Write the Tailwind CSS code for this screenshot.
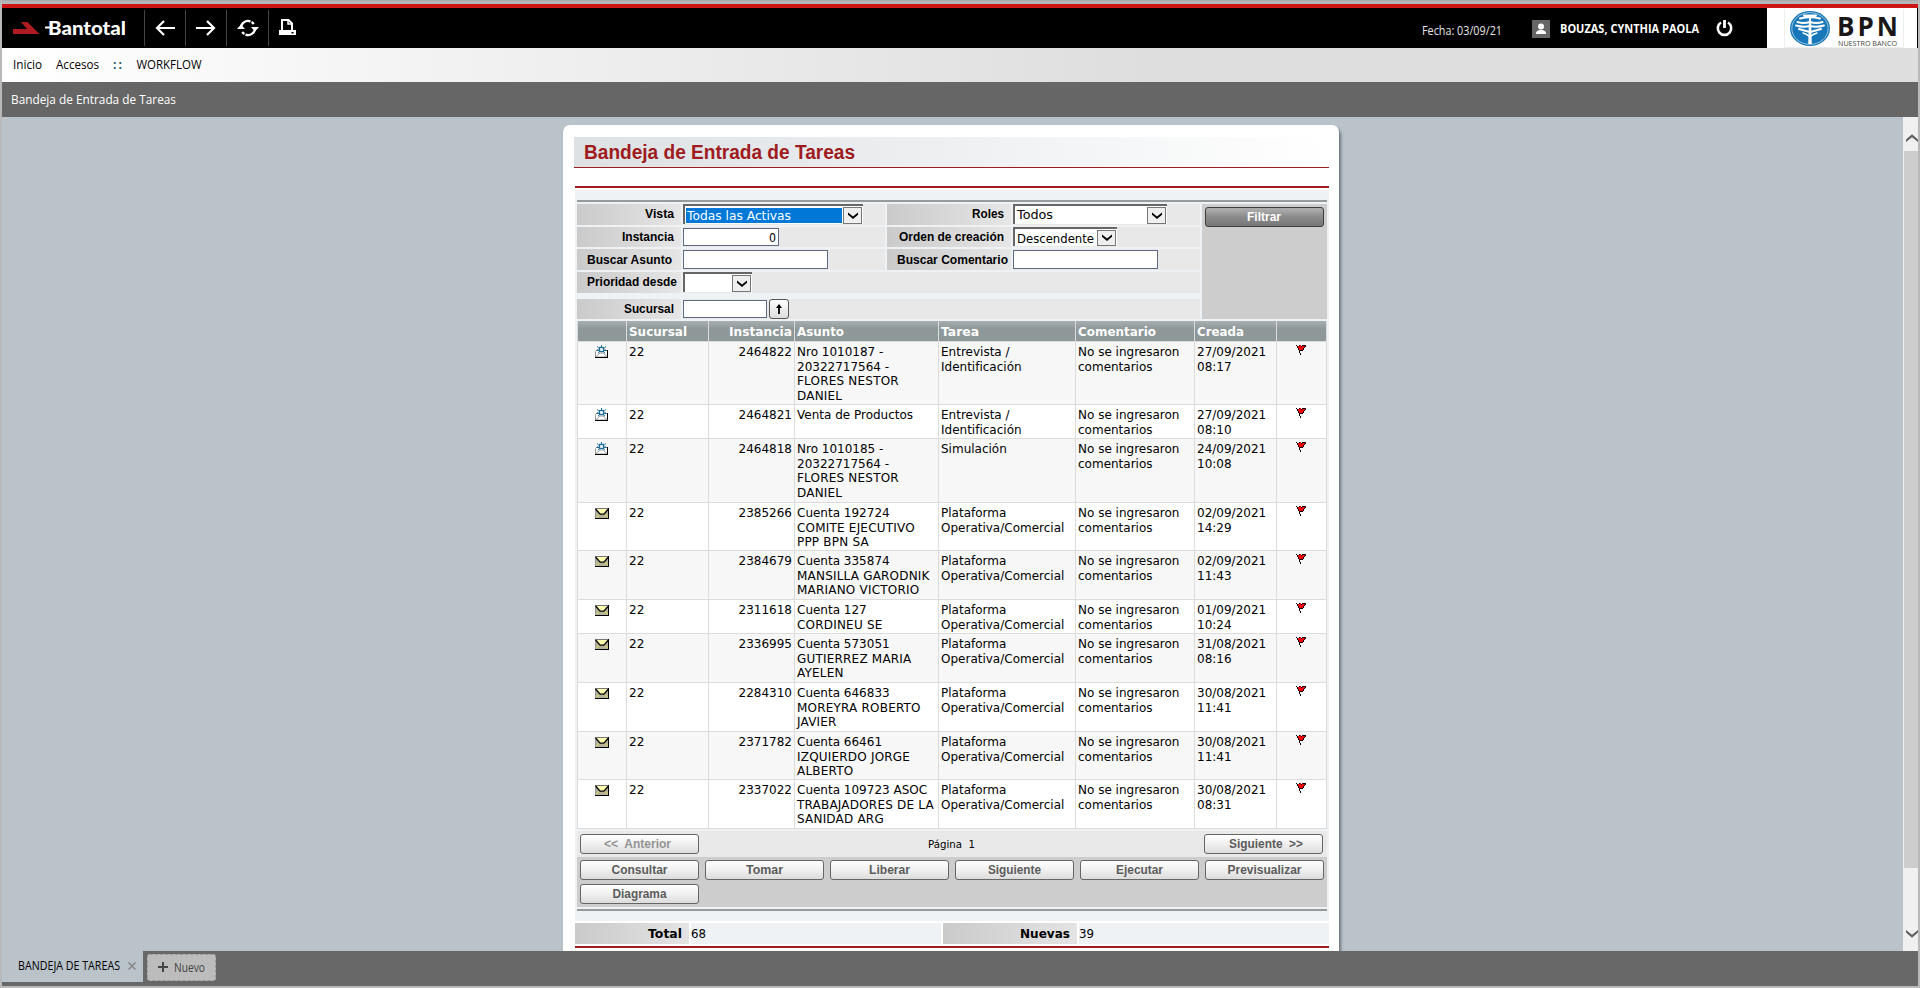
<!DOCTYPE html>
<html lang="es">
<head>
<meta charset="utf-8">
<title>Bandeja de Entrada de Tareas</title>
<script src="https://cdn.jsdelivr.net/npm/@tailwindcss/browser@4"></script>
</head>
<body class="w-[1920px] h-[988px] overflow-hidden bg-[#b9b9b9] font-['Open_Sans',sans-serif]">
<svg class="hidden">
  <symbol id="chev" viewBox="0 0 10 7"><path d="M0 0.5v2.2L5 7l5-4.3V0.5L5 4.6z"/></symbol>
  <symbol id="mail-new" viewBox="0 0 13 13"><path d="M.5 6.5 3 4h7l2.5 2.500V12H.5z" fill="#fff" stroke="#999"/><path d="M1 11.500 5 8h3l4 3.500" fill="none" stroke="#888" stroke-width=".8"/><path d="M0 12.500H13M12.500 5V13" stroke="#000" fill="none"/><path d="M6.500 0v2M2 1.500l1.500 1M11 1.500l-1.500 1M1.500 5.500h2.500M9 5.500h2.500M3 8l1.500-1M10 8 8.500 7" stroke="#1c6f9d" fill="none"/><rect x="4.500" y="2.500" width="4" height="4" fill="#fff" stroke="#1c6f9d" stroke-width="1.300"/></symbol>
  <symbol id="mail" viewBox="0 0 14 11"><path d="M0 0h14v11H0z" fill="#b5b29a"/><path d="M1 0h12L7 7z" fill="#ffffb0"/><path d="M1 9.500 5 5.500M13 9.500 9 5.500" stroke="#e9e640" stroke-width=".9"/><path d="M.5 0v10" stroke="#999"/><path d="M0 .5h14" stroke="#777"/><path d="M.5 1 5 6.200h4L13.500 1" fill="none" stroke="#000" stroke-width="1.200"/><path d="M0 10.500h14M13.500 0v11" stroke="#000" fill="none"/></symbol>
  <symbol id="flag" viewBox="0 0 10 10" shape-rendering="crispEdges"><path d="M1 1h2V0h2v1h5v1H9v1H8v2H4v1H3V4H2V3H1z" fill="#f00"/><path d="M0 0h1v1H0zM1 1h1v2H1zM2 3h1v2H2zM3 5h1v3H3zM4 8h1v2H4zM5 1h1v1H5zM6 0h4v1H6zM9 1h1v1H9zM8 2h1v1H8zM7 3h1v2H7zM4 5h3v1H4zM3 0h1v1H3z" fill="#100"/></symbol>
</svg>
<div class="flex flex-col w-[1916px] h-[986px] ml-[2px]">
  <div class="h-1 bg-[#b4b7ba] border-t border-[#aaa]"></div>
  <div class="h-1 bg-[#cb1517]"></div>
  <header class="h-10 bg-black flex items-stretch text-white">
    <div class="w-[142px] flex pt-[11px] pl-[11px] shrink-0">
      <svg class="w-[27px] h-[15px] mt-[2px]" viewBox="0 0 27 15"><path d="M0 8h14L8 1h6.500L26.500 13H0z" fill="#ae1c21"/></svg>
      <svg class="w-[88px] h-[20px] ml-1 shrink-0" viewBox="0 0 88 20"><text x="4" y="16" textLength="78" lengthAdjust="spacingAndGlyphs" fill="#fff" font-family="Lato" font-weight="900" font-size="19">Bantotal</text><path d="M1 8.500h8" stroke="#fff" stroke-width="2"/></svg>
    </div>
    <div class="w-[41px] my-[2px] mb-[2px] border-l border-[#444] flex items-center justify-center"><svg class="w-5 h-4" viewBox="0 0 20 16" fill="none" stroke="#fff" stroke-width="2.200"><path d="M20 8H2M9 1 2 8l7 7"/></svg></div>
    <div class="w-[41px] my-[2px] border-l border-[#444] flex items-center justify-center"><svg class="w-5 h-4" viewBox="0 0 20 16" fill="none" stroke="#fff" stroke-width="2.200"><path d="M0 8h18M11 1l7 7-7 7"/></svg></div>
    <div class="w-[42px] my-[2px] border-l border-[#444] flex items-center justify-center"><svg class="w-[22px] h-[18px]" viewBox="0 0 22 18"><path d="M4 9.500A7 7 0 0 1 13.500 2.400M18 8.500A7 7 0 0 1 8.500 15.600M7.500 15 A7 7 0 0 1 5.200 13M14.500 3A7 7 0 0 1 16.800 5" fill="none" stroke="#fff" stroke-width="2.300"/><path d="M0 10 4 5.500 8 10zM14 8h8l-4 4.500z" fill="#fff"/></svg></div>
    <div class="w-[40px] my-[2px] border-l border-[#444] pl-[10px] pt-[9px]"><svg class="w-[17px] h-[17px]" viewBox="0 0 17 17"><path d="M3 11V1h6.500L13 4.500V11" fill="none" stroke="#fff" stroke-width="2"/><path d="M9 1v4h4" fill="none" stroke="#fff" stroke-width="1.500"/><path d="M0 11h17v5H0z" fill="#fff"/><path d="M12.500 13h2v1.500h-2z" fill="#000"/></svg></div>
    <div class="flex-1"></div>
    <svg class="w-[84px] h-10" viewBox="0 0 84 40"><text x="1" y="27" textLength="80" lengthAdjust="spacingAndGlyphs" fill="#e6e6e6" font-family="Open Sans" font-size="12">Fecha: 03/09/21</text></svg>
    <div class="w-[18px] h-[18px] bg-[#666] mt-3 ml-[27px]"><svg class="w-[18px] h-[18px]" viewBox="0 0 18 18" fill="#fff"><circle cx="9" cy="6.500" r="3"/><path d="M4 14c0-3 2-4 5-4s5 1 5 4z"/></svg></div>
    <svg class="w-[142px] h-10 ml-[10px]" viewBox="0 0 142 40"><text x="0" y="25" textLength="139" lengthAdjust="spacingAndGlyphs" fill="#fff" font-family="Open Sans" font-weight="700" font-size="12">BOUZAS, CYNTHIA PAOLA</text></svg>
    <svg class="w-[17px] h-[18px] mt-[11px] ml-[14px] mr-[34px]" viewBox="0 0 17 18" fill="none" stroke="#fff"><path d="M5 3.500a6.700 6.700 0 1 0 7 0" stroke-width="2.600"/><path d="M8.500 1v8" stroke-width="2.800"/></svg>
    <svg class="w-[150px] h-10 bg-white mr-[1px]" viewBox="0 0 150 40"><path d="M17.500 1v38.500h119V1" fill="none" stroke="#eee"/><ellipse cx="43" cy="20.500" rx="20" ry="17.500" fill="#1777b8"/><ellipse cx="43" cy="20.500" rx="18.200" ry="15.900" fill="none" stroke="#fff" stroke-opacity=".7" stroke-width=".8"/><path d="M42 10h2l.8 26h-3.600z" fill="#fff"/><g fill="none" stroke="#fff" stroke-width="2" stroke-linecap="round"><path d="M37 7.500h12M33 10.500q10-2.500 20 0M30.500 14q6 2 12.500 0 6.500 2 12.500 0M29 17.500q7 2 14 .5 7 1.500 14-.5M32 21q5 1.500 11 3 6-1.500 11-3"/><path d="M36 25q4 1 7 4 3-3 7-4" stroke-width="1.300"/></g><text x="70" y="27.500" textLength="61" lengthAdjust="spacing" fill="#1b1719" font-family="Open Sans" font-weight="700" font-size="26">BPN</text><text x="71" y="37.500" textLength="59" lengthAdjust="spacingAndGlyphs" fill="#444" font-family="Open Sans" font-size="7">NUESTRO BANCO</text></svg>
  </header>
  <nav class="h-[34px] bg-linear-to-r from-white from-0% to-[#dedede] to-60%">
    <svg class="w-[220px] h-[34px] font-['Open_Sans']" viewBox="0 0 220 34" font-size="12"><text x="11" y="21" textLength="29" lengthAdjust="spacingAndGlyphs">Inicio</text><text x="54" y="21" textLength="43" lengthAdjust="spacingAndGlyphs">Accesos</text><text x="111" y="21" fill="#256" textLength="9" font-weight="700">::</text><text x="134.500" y="21" textLength="65" lengthAdjust="spacingAndGlyphs">WORKFLOW</text></svg>
  </nav>
  <div class="h-[35px] bg-[#666]"><svg class="w-[220px] h-[35px] font-['Open_Sans']" viewBox="0 0 220 35" font-size="13" fill="#fff"><text x="9" y="22" textLength="165" lengthAdjust="spacingAndGlyphs">Bandeja de Entrada de Tareas</text></svg></div>
  <main class="h-[834px] bg-[#bac2ca] flex overflow-hidden">
    <div class="flex-1 pl-[561px] pt-2">
      <section class="w-[776px] h-[840px] bg-white rounded-t-[7px] shadow-[2px_3px_3px_#6c747c] pl-[11px] pt-3 pr-[10px]">
        <div class="h-[31px] bg-linear-to-r from-[#dde1e4] to-white border-b border-[#9d1c20]"><svg class="w-[300px] h-[30px]" viewBox="0 0 300 30"><text x="10" y="22" textLength="271" lengthAdjust="spacingAndGlyphs" fill="#9e1b20" font-family="Liberation Sans" font-weight="700" font-size="19.500">Bandeja de Entrada de Tareas</text></svg></div>
        <div class="ml-px mt-[18px] h-[2px] bg-[#9d1c20]"></div>
        <div class="ml-px mt-[2px] bg-[#eef2f5] px-[2px] pt-[10px] h-[731px]">
          <div class="h-[2px] bg-[#959a9b] mb-[2px]"></div>
          <div class="flex gap-[2px] h-[115px]" id="filters">
            <div class="w-[623px] flex flex-col text-[13px] font-['DejaVu_Sans',sans-serif]">
              <div class="flex gap-[2px] h-[21px] mb-[2px]">
                <div class="w-[104px] bg-linear-to-r from-[#cacaca] to-[#e6e6e6]"><svg class="w-[104px] h-[21px] block"><text x="68" y="14" textLength="29">Vista</text></svg></div>
                <div class="w-[202px] bg-[#e8e8e8]"><div class="w-[180px] h-[20px] border-t-2 border-l-2 border-[#666] bg-white flex items-center justify-between pl-px pr-px"><svg class="w-[156px] h-[15px] bg-[#0078d7]"><text x="1" y="12" class="fill-white" font-weight="400" textLength="104" lengthAdjust="spacingAndGlyphs">Todas las Activas</text></svg><span class="w-[19px] h-[17px] border border-[#777] bg-[#efefef] flex items-center justify-center"><svg class="w-[10px] h-[7px]"><use href="#chev"/></svg></span></div></div>
                <div class="w-[124px] bg-linear-to-r from-[#cacaca] to-[#e6e6e6]"><svg class="w-[124px] h-[21px] block"><text x="85" y="14" textLength="32">Roles</text></svg></div>
                <div class="w-[187px] bg-[#e8e8e8]"><div class="w-[154px] h-[20px] border-t-2 border-l-2 border-[#666] bg-white flex items-center justify-between pl-px pr-px"><svg class="w-[120px] h-[16px]"><text x="1" y="12" font-weight="400" textLength="36" lengthAdjust="spacingAndGlyphs">Todos</text></svg><span class="w-[19px] h-[17px] border border-[#777] bg-[#efefef] flex items-center justify-center"><svg class="w-[10px] h-[7px]"><use href="#chev"/></svg></span></div></div>
              </div>
              <div class="flex gap-[2px] h-[20px] mb-[2px]">
                <div class="w-[104px] bg-linear-to-r from-[#cacaca] to-[#e6e6e6]"><svg class="w-[104px] h-[20px] block"><text x="45" y="14" textLength="52">Instancia</text></svg></div>
                <div class="w-[202px] bg-[#e8e8e8]"><div class="mt-px w-[96px] h-[18px] border border-[#5f6b85] bg-white"><svg class="w-[94px] h-[16px] block"><text x="85" y="13" font-weight="400" textLength="7" lengthAdjust="spacingAndGlyphs">0</text></svg></div></div>
                <div class="w-[124px] bg-linear-to-r from-[#cacaca] to-[#e6e6e6]"><svg class="w-[124px] h-[20px] block"><text x="12" y="14" textLength="105">Orden de creación</text></svg></div>
                <div class="w-[187px] bg-[#e8e8e8]"><div class="w-[104px] h-[19px] border-t-2 border-l-2 border-[#666] bg-white flex items-center justify-between pl-px pr-px"><svg class="w-[80px] h-[16px]"><text x="1" y="12.500" font-weight="400" textLength="77" lengthAdjust="spacingAndGlyphs">Descendente</text></svg><span class="w-[19px] h-[16px] border border-[#777] bg-[#efefef] flex items-center justify-center"><svg class="w-[10px] h-[7px]"><use href="#chev"/></svg></span></div></div>
              </div>
              <div class="flex gap-[2px] h-[21px] mb-[2px]">
                <div class="w-[104px] bg-linear-to-r from-[#cacaca] to-[#e6e6e6]"><svg class="w-[104px] h-[21px] block"><text x="10" y="15" textLength="85">Buscar Asunto</text></svg></div>
                <div class="w-[202px] bg-[#e8e8e8]"><div class="mt-px w-[145px] h-[19px] border border-[#5f6b85] bg-white"></div></div>
                <div class="w-[124px] bg-linear-to-r from-[#cacaca] to-[#e6e6e6]"><svg class="w-[124px] h-[21px] block"><text x="10" y="15" textLength="111">Buscar Comentario</text></svg></div>
                <div class="w-[187px] bg-[#e8e8e8]"><div class="mt-px w-[145px] h-[19px] border border-[#5f6b85] bg-white"></div></div>
              </div>
              <div class="flex gap-[2px] h-[21px] mb-[6px]">
                <div class="w-[104px] bg-linear-to-r from-[#cacaca] to-[#e6e6e6]"><svg class="w-[104px] h-[21px] block"><text x="10" y="14" textLength="90">Prioridad desde</text></svg></div>
                <div class="w-[517px] bg-[#e8e8e8]"><div class="w-[69px] h-[20px] border-t-2 border-l-2 border-[#666] bg-white flex items-center justify-end pr-px"><span class="w-[19px] h-[17px] border border-[#777] bg-[#efefef] flex items-center justify-center"><svg class="w-[10px] h-[7px]"><use href="#chev"/></svg></span></div></div>
              </div>
              <div class="flex gap-[2px] h-[20px]">
                <div class="w-[104px] bg-linear-to-r from-[#cacaca] to-[#e6e6e6]"><svg class="w-[104px] h-[20px] block"><text x="47" y="14" textLength="50">Sucursal</text></svg></div>
                <div class="w-[517px] bg-[#e8e8e8] flex gap-[2px]"><div class="mt-px w-[84px] h-[18px] border border-[#5f6b85] bg-white"></div><div class="w-[20px] h-[20px] rounded-[3px] border border-[#555] bg-linear-to-b from-white to-[#ddd] flex items-center justify-center"><svg class="w-[8px] h-[10px]" viewBox="0 0 8 10"><path d="M4 10V2" stroke="#000" stroke-width="1.800"/><path d="M4 0 7 4H1z"/></svg></div></div>
              </div>
            </div>
            <div class="w-[125px] bg-[#cdcdcd] pl-[3px] pt-[3px]"><button class="w-[119px] h-[20px] block rounded-[3px] border border-[#3c3c3c] bg-linear-to-b from-[#aaa] from-10% via-[#8b8b8b] via-50% to-[#777]"><svg class="w-[117px] h-[18px] block"><text x="41" y="13" textLength="34" class="fill-white">Filtrar</text></svg></button></div>
          </div>
          <div id="grid" class="mt-[2px] w-[750px] h-[508px] border-l border-[#dcdcdc] font-['DejaVu_Sans',sans-serif]"></div>
          <div class="mt-[2px] h-[26px] bg-[#e9e9e9] flex justify-between items-start pt-[3px] pl-[3px] pr-[4px]">
            <button class="w-[119px] h-[20px] rounded-[3px] border border-[#666] bg-linear-to-b from-white via-[#f0f0f0] to-[#dcdcdc]"><svg class="w-[117px] h-[18px] block"><text x="23" y="13" textLength="67" class="fill-[#949494]" xml:space="preserve">&lt;&lt;  Anterior</text></svg></button>
            <svg class="w-[50px] h-[20px] font-['DejaVu_Sans']"><text x="1" y="14" font-size="10" xml:space="preserve" textLength="47" lengthAdjust="spacingAndGlyphs">Página  1</text></svg>
            <button class="w-[119px] h-[20px] rounded-[3px] border border-[#666] bg-linear-to-b from-white via-[#f0f0f0] to-[#dcdcdc]"><svg class="w-[117px] h-[18px] block"><text x="24" y="13" textLength="74" class="fill-[#5c5c5c]" xml:space="preserve">Siguiente  &gt;&gt;</text></svg></button>
          </div>
          <div id="actions" class="h-[50px] bg-[#cdcdcd] flex flex-wrap content-start gap-x-[6px] gap-y-[4px] pt-[3px] pl-[3px]"></div>
          <div class="h-[2px] mt-[2px] bg-[#959a9b]"></div>
        </div>
        <div class="ml-px mt-[2px] h-[21px] flex gap-[2px] font-['DejaVu_Sans'] text-[13px]">
          <div class="w-[114px] bg-linear-to-r from-[#cacaca] to-[#e4e4e4]"><svg class="w-[114px] h-[21px] block"><text x="73" y="15" textLength="34" lengthAdjust="spacingAndGlyphs" font-weight="700">Total</text></svg></div>
          <div class="w-[250px] bg-[#eef2f5]"><svg class="w-[50px] h-[21px] block"><text x="0" y="15" textLength="15" lengthAdjust="spacingAndGlyphs">68</text></svg></div>
          <div class="w-[134px] bg-linear-to-r from-[#cacaca] to-[#e4e4e4]"><svg class="w-[134px] h-[21px] block"><text x="77" y="15" textLength="50" lengthAdjust="spacingAndGlyphs" font-weight="700">Nuevas</text></svg></div>
          <div class="w-[250px] bg-[#eef2f5]"><svg class="w-[50px] h-[21px] block"><text x="0" y="15" textLength="15" lengthAdjust="spacingAndGlyphs">39</text></svg></div>
        </div>
        <div class="ml-px mt-[2px] h-[2px] bg-[#9d1c20]"></div>
      </section>
    </div>
    <div class="w-[15px] bg-[#f0f0f0] flex flex-col items-end">
      <div class="h-[34px] w-[15px] flex items-center justify-center pt-[9px] pl-[2px]"><svg class="w-[12px] h-[9px] shrink-0 rotate-180 fill-[#606060]"><use href="#chev"/></svg></div>
      <div class="w-[14px] h-[717px] bg-[#cdcdcd]"></div>
      <div class="flex-1 w-[15px] flex justify-center items-end pb-[13px] pl-[2px]"><svg class="w-[12px] h-[9px] fill-[#606060]"><use href="#chev"/></svg></div>
    </div>
  </main>
  <footer class="h-[35px] bg-[#686868] flex">
    <div class="w-[141px] h-[31px] bg-[#bac2ca]"><svg class="w-[141px] h-[31px] block font-['Open_Sans']"><text x="16" y="19" font-size="12" textLength="102" lengthAdjust="spacingAndGlyphs">BANDEJA DE TAREAS</text><path d="m126.500 11.500 7 7m0-7-7 7" stroke="#888" stroke-width="1.500"/></svg></div>
    <div class="w-[69px] h-[27px] ml-1 mt-[3px] rounded-[3px] bg-[#bcbcbc] border border-dashed border-[#999]"><svg class="w-[67px] h-[25px] block font-['Open_Sans']"><path d="M10 12h10M15 7v10" stroke="#444" stroke-width="2"/><text x="26" y="17" font-size="12" fill="#444" textLength="31" lengthAdjust="spacingAndGlyphs">Nuevo</text></svg></div>
  </footer>
</div>
<script>
const labelFont = "font-family:'Liberation Sans',sans-serif;font-weight:700;font-size:12px";
const widths = [49, 82, 86, 144, 137, 119, 82, 50];
const heads = [[''], ['Sucursal', 58], ['Instancia', 63], ['Asunto', 47], ['Tarea', 38], ['Comentario', 78], ['Creada', 47], ['']];
const P = ['Plataforma', 'Operativa/Comercial'], E = ['Entrevista /', 'Identificación'];
const rows = [
  [63, 1, '2464822', ['Nro 1010187 -', '20322717564 -', 'FLORES NESTOR', 'DANIEL'], E, ['27/09/2021', '08:17']],
  [34, 1, '2464821', ['Venta de Productos'], E, ['27/09/2021', '08:10']],
  [64, 1, '2464818', ['Nro 1010185 -', '20322717564 -', 'FLORES NESTOR', 'DANIEL'], ['Simulación'], ['24/09/2021', '10:08']],
  [48, 0, '2385266', ['Cuenta 192724', 'COMITE EJECUTIVO', 'PPP BPN SA'], P, ['02/09/2021', '14:29']],
  [49, 0, '2384679', ['Cuenta 335874', 'MANSILLA GARODNIK', 'MARIANO VICTORIO'], P, ['02/09/2021', '11:43']],
  [34, 0, '2311618', ['Cuenta 127', 'CORDINEU SE'], P, ['01/09/2021', '10:24']],
  [49, 0, '2336995', ['Cuenta 573051', 'GUTIERREZ MARIA', 'AYELEN'], P, ['31/08/2021', '08:16']],
  [49, 0, '2284310', ['Cuenta 646833', 'MOREYRA ROBERTO', 'JAVIER'], P, ['30/08/2021', '11:41']],
  [48, 0, '2371782', ['Cuenta 66461', 'IZQUIERDO JORGE', 'ALBERTO'], P, ['30/08/2021', '11:41']],
  [49, 0, '2337022', ['Cuenta 109723 ASOC', 'TRABAJADORES DE LA', 'SANIDAD ARG'], P, ['30/08/2021', '08:31']]
];
const size = w => `style="width:${w}px"`;
let html = '<div class="flex h-[21px] bg-linear-to-b from-[#a7afb0] to-[#8f9899] to-40% border-b border-[#dcdcdc] text-white font-bold text-[13px]">';
heads.forEach(([t, w], i) => {
  html += `<div class="shrink-0 border-r border-[#dcdcdc]" ${size(widths[i])}>` + (t ? `<svg class="w-full h-[20px] block"><text fill="#fff" x="${i === 2 ? 20 : 2}" y="15" textLength="${w}" lengthAdjust="spacingAndGlyphs">${t}</text></svg>` : '') + '</div>';
});
html += '</div>';
const line = l => `<div class="${/^[A-Z ]+$/.test(l) ? 'tracking-[0.2px]' : ''}">${l}</div>`;
const cell = (i, lines) => `<div class="shrink-0 border-r border-[#dcdcdc] pl-[2px] pt-[3px] ${i === 2 ? 'text-right pr-[2px]' : ''}" ${size(widths[i])}>${lines.map(line).join('')}</div>`;
rows.forEach((r, n) => {
  html += `<div class="flex border-b border-[#dcdcdc] text-[12px] leading-[14.6px] whitespace-nowrap ${n % 2 ? 'bg-white' : 'bg-[#f7f7f7]'}" style="height:${r[0]}px">`
    + `<div class="shrink-0 border-r border-[#dcdcdc] pl-[17px] pt-[3px]" ${size(widths[0])}>` + (r[1] ? '<svg class="w-[13px] h-[13px]"><use href="#mail-new"/></svg>' : '<svg class="w-[14px] h-[11px] mt-[2px]"><use href="#mail"/></svg>') + '</div>'
    + cell(1, ['22']) + cell(2, [r[2]]) + cell(3, r[3]) + cell(4, r[4]) + cell(5, ['No se ingresaron', 'comentarios']) + cell(6, r[5])
    + `<div class="shrink-0 border-r border-[#dcdcdc] pl-[19px] pt-[3px]" ${size(widths[7])}><svg class="w-[10px] h-[10px]"><use href="#flag"/></svg></div></div>`;
});
document.getElementById('grid').innerHTML = html;
document.getElementById('actions').innerHTML = [['Consultar', 56], ['Tomar', 37], ['Liberar', 41], ['Siguiente', 53], ['Ejecutar', 47], ['Previsualizar', 74], ['Diagrama', 54]].map(([t, w]) =>
  `<button class="w-[119px] h-[20px] rounded-[3px] border border-[#666] bg-linear-to-b from-white via-[#f0f0f0] to-[#dcdcdc]"><svg class="w-[117px] h-[18px] block"><text x="${(117 - w) / 2}" y="13" textLength="${w}" class="fill-[#5c5c5c]">${t}</text></svg></button>`).join('');
document.querySelectorAll('#filters text:not([font-weight]), button text').forEach(t => { t.style.cssText = labelFont; t.setAttribute('lengthAdjust', 'spacingAndGlyphs'); });
</script>
</body>
</html>
